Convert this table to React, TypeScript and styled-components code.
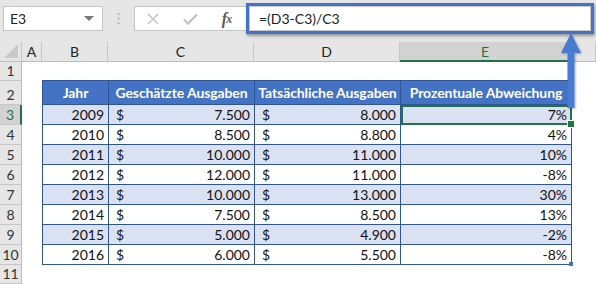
import React from "react";
import styled, { createGlobalStyle } from "styled-components";

const GlobalStyle = createGlobalStyle`
  html, body {
    margin: 0;
    padding: 0;
    background: #ffffff;
    font-family: "Lato", "Liberation Sans", sans-serif;
  }
`;

const COLS = "22px 20px 66px 146px 146px 171px 1fr";

const rows = [
  { year: 2009, est: "7.500", act: "8.000", pct: "7%" },
  { year: 2010, est: "8.500", act: "8.800", pct: "4%" },
  { year: 2011, est: "10.000", act: "11.000", pct: "10%" },
  { year: 2012, est: "12.000", act: "11.000", pct: "-8%" },
  { year: 2013, est: "10.000", act: "13.000", pct: "30%" },
  { year: 2014, est: "7.500", act: "8.500", pct: "13%" },
  { year: 2015, est: "5.000", act: "4.900", pct: "-2%" },
  { year: 2016, est: "6.000", act: "5.500", pct: "-8%" },
];

const App = () => {
  return (
    <>
      <GlobalStyle />
      <Page>
        <Toolbar>
          <NameBox>
            <span>E3</span>
            <DropCaret />
          </NameBox>
          <Grip>
            <svg width="3" height="11" viewBox="0 0 3 11">
              <rect x="0.5" y="0" width="2" height="2" fill="#b5b5b5" />
              <rect x="0.5" y="4.5" width="2" height="2" fill="#b5b5b5" />
              <rect x="0.5" y="9" width="2" height="2" fill="#b5b5b5" />
            </svg>
          </Grip>
          <FxBox>
            <FxIcon>
              <svg width="12" height="12" viewBox="0 0 12 12">
                <path d="M1 1 L11 11 M11 1 L1 11" stroke="#c4c4c4" strokeWidth="1.5" />
              </svg>
            </FxIcon>
            <FxIcon>
              <svg width="15" height="12" viewBox="0 0 15 12">
                <path d="M1 6.5 L5 10.5 L14 1.5" stroke="#c4c4c4" strokeWidth="2.4" fill="none" />
              </svg>
            </FxIcon>
            <FxIcon $italic>
              f<sub>x</sub>
            </FxIcon>
          </FxBox>
          <FormulaHighlight>
            <FormulaInput>=(D3-C3)/C3</FormulaInput>
          </FormulaHighlight>
        </Toolbar>

        <Sheet>
          <Corner>
            <svg width="14" height="14" viewBox="0 0 14 14">
              <polygon points="14,0 14,14 0,14" fill="#c9c9c9" />
            </svg>
          </Corner>
          {["A", "B", "C", "D", "E"].map((c) => (
            <ColHead key={c} $active={c === "E"}>
              {c}
            </ColHead>
          ))}
          <ColHead />

          {Array.from({ length: 11 }, (_, i) => i + 1).map((n) => (
            <RowHead key={n} $active={n === 3} style={{ gridRow: n + 1 }}>
              {n}
            </RowHead>
          ))}

          <Table>
            <HeadCell>Jahr</HeadCell>
            <HeadCell>Geschätzte Ausgaben</HeadCell>
            <HeadCell>Tatsächliche Ausgaben</HeadCell>
            <HeadCell>Prozentuale Abweichung</HeadCell>
            {rows.map((r, i) => (
              <React.Fragment key={r.year}>
                <Cell $band={i % 2 === 0}>{r.year}</Cell>
                <Money $band={i % 2 === 0}>
                  <span>$</span>
                  <span>{r.est}</span>
                </Money>
                <Money $band={i % 2 === 0}>
                  <span>$</span>
                  <span>{r.act}</span>
                </Money>
                <Cell $band={i % 2 === 0} $selected={i === 0} $last={i === rows.length - 1}>
                  {r.pct}
                  {i === 0 && <Handle />}
                </Cell>
              </React.Fragment>
            ))}
          </Table>
        </Sheet>

        <Arrow width="24" height="80" viewBox="0 0 24 80">
          <defs>
            <filter id="sh" x="-50%" y="-20%" width="200%" height="140%">
              <feDropShadow dx="1" dy="1" stdDeviation="1" floodColor="#000" floodOpacity="0.3" />
            </filter>
          </defs>
          <path d="M12 1 L22 21 L15.5 21 L15.5 76 L8.5 76 L8.5 21 L2 21 Z" fill="#4a7bd0" filter="url(#sh)" />
        </Arrow>
      </Page>
    </>
  );
};

const Page = styled.div`
  position: relative;
  width: 596px;
  height: 284px;
  overflow: hidden;
  background: #ffffff;
`;

const Toolbar = styled.div`
  height: 42px;
  background: #e6e6e6;
  display: flex;
  align-items: flex-start;
  padding-top: 6px;
  box-sizing: border-box;
`;

const NameBox = styled.div`
  margin-left: 3px;
  width: 100px;
  height: 25px;
  box-sizing: border-box;
  background: #ffffff;
  border: 1px solid #c6c6c6;
  display: flex;
  align-items: center;
  justify-content: space-between;
  padding: 0 8px 0 6px;
  font-family: "Lato", "Liberation Sans", sans-serif;
  font-size: 14px;
  color: #222;
`;

const DropCaret = styled.span`
  width: 0;
  height: 0;
  border-left: 5px solid transparent;
  border-right: 5px solid transparent;
  border-top: 5px solid #777;
`;

const Grip = styled.div`
  width: 31px;
  height: 25px;
  display: flex;
  align-items: center;
  justify-content: center;
`;

const FxBox = styled.div`
  width: 114px;
  height: 25px;
  box-sizing: border-box;
  background: #ffffff;
  border: 1px solid #c6c6c6;
  border-right: none;
  display: flex;
  align-items: center;
  gap: 7px;
  padding-left: 3px;
`;

const FxIcon = styled.div<{ $italic?: boolean }>`
  width: 30px;
  display: flex;
  align-items: center;
  justify-content: center;
  font-family: "Liberation Serif", serif;
  font-style: ${({ $italic }) => ($italic ? "italic" : "normal")};
  font-weight: bold;
  font-size: 16px;
  color: #5a5a5a;
  sub {
    font-size: 12px;
    vertical-align: baseline;
    position: relative;
    top: 1px;
    margin-left: -1px;
  }
`;

const FormulaHighlight = styled.div`
  margin-top: -3px;
  margin-left: -2px;
  width: 348px;
  height: 31px;
  box-sizing: border-box;
  border: 3px solid #4472c4;
  box-shadow: 1px 2px 3px rgba(0, 0, 0, 0.35);
  background: #ffffff;
`;

const FormulaInput = styled.div`
  height: 100%;
  box-sizing: border-box;
  border: 1px solid #c6c6c6;
  padding-left: 9px;
  display: flex;
  align-items: center;
  font-family: "Lato", "Liberation Sans", sans-serif;
  font-size: 14px;
  color: #222;
`;

const Sheet = styled.div`
  display: grid;
  grid-template-columns: ${COLS};
  grid-template-rows: 20px 19px 24px repeat(8, 20px) 1fr;
  height: 242px;
`;

const Corner = styled.div`
  grid-row: 1;
  grid-column: 1;
  background: #e6e6e6;
  border-right: 1px solid #c6c6c6;
  border-bottom: 1px solid #bdbdbd;
  display: flex;
  align-items: flex-end;
  justify-content: flex-end;
  padding: 0 3px 3px 0;
  box-sizing: border-box;
`;

const ColHead = styled.div<{ $active?: boolean }>`
  grid-row: 1;
  background: ${({ $active }) => ($active ? "#d2d2d2" : "#e6e6e6")};
  border-right: 1px solid #c6c6c6;
  border-bottom: ${({ $active }) => ($active ? "2px solid #217346" : "1px solid #bdbdbd")};
  box-sizing: border-box;
  display: flex;
  align-items: center;
  justify-content: center;
  font-family: "Lato", "Liberation Sans", sans-serif;
  font-size: 14px;
  color: ${({ $active }) => ($active ? "#217346" : "#222")};
`;

const RowHead = styled.div<{ $active?: boolean }>`
  grid-column: 1;
  background: ${({ $active }) => ($active ? "#d2d2d2" : "#e6e6e6")};
  border-right: ${({ $active }) => ($active ? "2px solid #217346" : "1px solid #bdbdbd")};
  border-bottom: 1px solid #c6c6c6;
  box-sizing: border-box;
  display: flex;
  align-items: flex-end;
  justify-content: center;
  padding-bottom: 1px;
  font-family: "Lato", "Liberation Sans", sans-serif;
  font-size: 14px;
  color: ${({ $active }) => ($active ? "#217346" : "#333")};
`;

const Table = styled.div`
  grid-column: 3 / 7;
  grid-row: 3 / 12;
  display: grid;
  grid-template-columns: 66px 146px 146px 171px;
  grid-template-rows: 24px repeat(8, 20px);
  margin-top: -1px;
  border-top: 1px solid #2f5597;
  border-left: 1px solid #2f5597;
  font-family: "Lato", "Liberation Sans", sans-serif;
  font-size: 14px;
  color: #111;
`;

const HeadCell = styled.div`
  background: #4472c4;
  color: #ffffff;
  font-weight: bold;
  display: flex;
  align-items: center;
  justify-content: center;
  white-space: nowrap;
  border-right: 1px solid #2f5597;
  border-bottom: 1px solid #2f5597;
  box-sizing: border-box;
  letter-spacing: -0.1px;
`;

const Cell = styled.div<{ $band?: boolean; $selected?: boolean; $last?: boolean }>`
  position: relative;
  background: ${({ $band }) => ($band ? "#d9e1f2" : "#ffffff")};
  border-right: 1px solid #2f5597;
  border-bottom: 1px solid #2f5597;
  box-sizing: border-box;
  display: flex;
  align-items: flex-end;
  justify-content: flex-end;
  padding: 0 4px 1px 0;
  ${({ $selected }) =>
    $selected &&
    `
    outline: 2px solid #217346;
    outline-offset: -2px;
  `}
  ${({ $last }) =>
    $last &&
    `
    &::after {
      content: "";
      position: absolute;
      right: -2px;
      bottom: -2px;
      width: 4px;
      height: 4px;
      background: #4472c4;
    }
  `}
`;

const Money = styled(Cell)`
  justify-content: space-between;
  padding-left: 7px;
`;

const Handle = styled.span`
  position: absolute;
  right: -4px;
  bottom: -4px;
  width: 6px;
  height: 6px;
  background: #217346;
  border: 1px solid #ffffff;
  z-index: 2;
`;

const Arrow = styled.svg`
  position: absolute;
  left: 559px;
  top: 32px;
  z-index: 5;
`;

export default App;
